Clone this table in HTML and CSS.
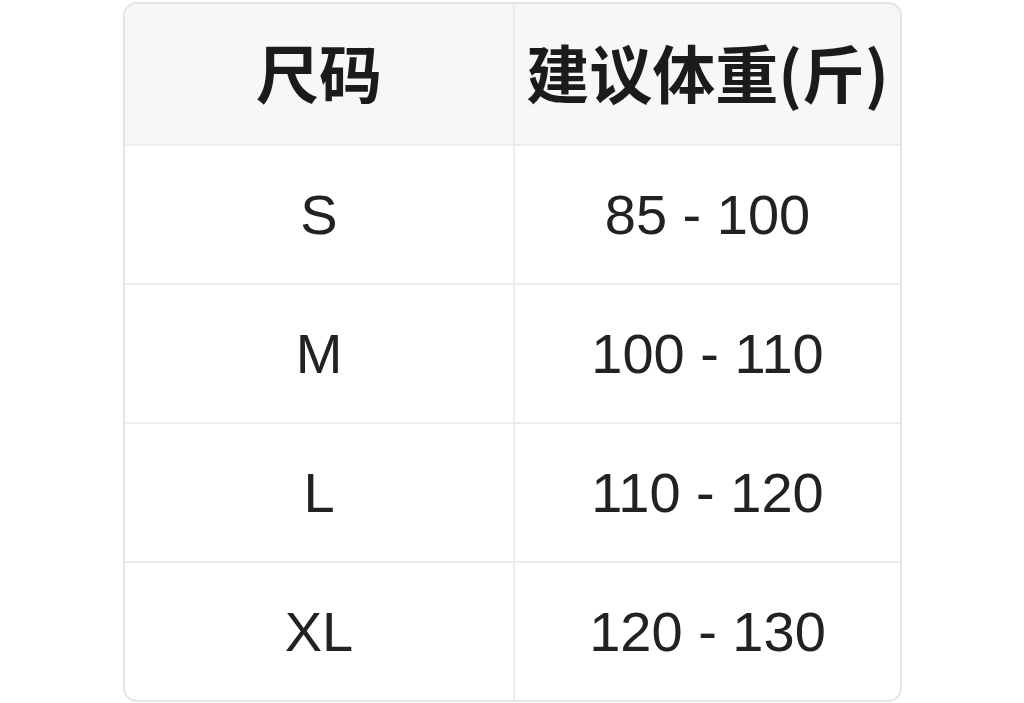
FILE: index.html
```html
<!DOCTYPE html>
<html lang="zh-CN">
<head>
<meta charset="utf-8">
<title>尺码表</title>
<link rel="stylesheet" href="styles.css">
</head>
<body>
<div class="card">
  <table class="size-table">
    <thead>
      <tr><th>尺码</th><th>建议体重(斤)</th></tr>
    </thead>
    <tbody>
      <tr><td>S</td><td>85 - 100</td></tr>
      <tr><td>M</td><td>100 - 110</td></tr>
      <tr><td>L</td><td>110 - 120</td></tr>
      <tr><td>XL</td><td>120 - 130</td></tr>
    </tbody>
  </table>
</div>
</body>
</html>
```
FILE: styles.css
```css
html, body {
  margin: 0;
  padding: 0;
  background: #ffffff;
}
body {
  padding: 2px 0 0 123px;
}
.card {
  width: 775px;
  border: 2px solid #e3e4e8;
  border-radius: 14px;
  overflow: hidden;
  background: #ffffff;
}
.size-table {
  width: 100%;
  border-collapse: separate;
  border-spacing: 0;
  table-layout: fixed;
}
.size-table th,
.size-table td {
  padding: 0;
  text-align: center;
  vertical-align: middle;
  border-bottom: 2px solid #ebecef;
}
.size-table th + th,
.size-table td + td {
  border-left: 2px solid #ebecef;
}
.size-table th:first-child,
.size-table td:first-child {
  width: 388px;
}
.size-table th {
  height: 132px;
  padding-bottom: 8px;
  background: #f7f7f8;
  font-family: "Noto Sans CJK SC", "Liberation Sans", sans-serif;
  font-weight: 700;
  font-size: 63px;
  color: #1b1b1b;
}
.size-table td {
  height: 137px;
  font-family: "Liberation Sans", "Noto Sans CJK SC", sans-serif;
  font-size: 56px;
  color: #222222;
}
.size-table tbody tr:last-child td {
  border-bottom: none;
}
```
